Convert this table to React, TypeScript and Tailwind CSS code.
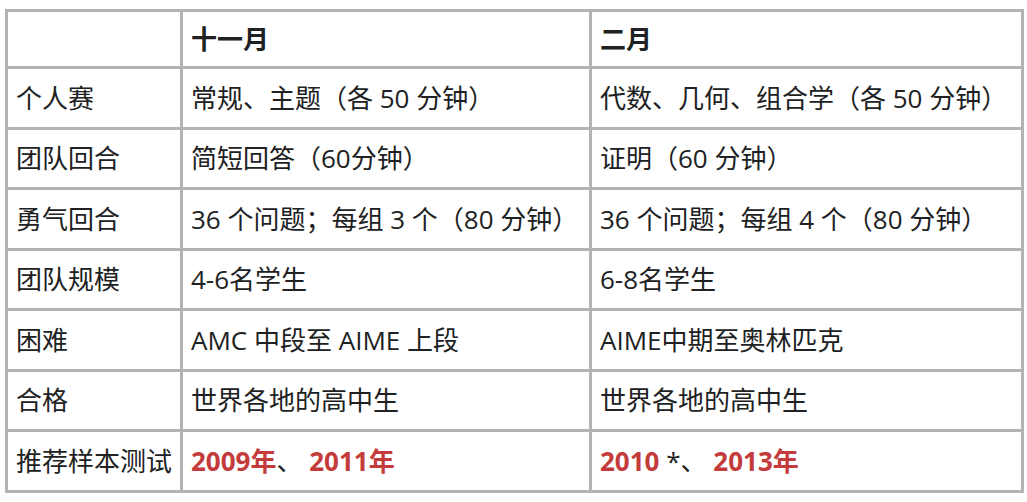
const rows: { label: string; nov: React.ReactNode; feb: React.ReactNode }[] = [
  { label: "个人赛", nov: "常规、主题（各 50 分钟）", feb: "代数、几何、组合学（各 50 分钟）" },
  { label: "团队回合", nov: "简短回答（60分钟）", feb: "证明（60 分钟）" },
  { label: "勇气回合", nov: "36 个问题；每组 3 个（80 分钟）", feb: "36 个问题；每组 4 个（80 分钟）" },
  { label: "团队规模", nov: "4-6名学生", feb: "6-8名学生" },
  { label: "困难", nov: "AMC 中段至 AIME 上段", feb: "AIME中期至奥林匹克" },
  { label: "合格", nov: "世界各地的高中生", feb: "世界各地的高中生" },
  {
    label: "推荐样本测试",
    nov: (
      <>
        <a className="font-bold text-[#c33b3b]">2009年</a>、 <a className="font-bold text-[#c33b3b]">2011年</a>
      </>
    ),
    feb: (
      <>
        <a className="font-bold text-[#c33b3b]">2010</a> *、 <a className="font-bold text-[#c33b3b]">2013年</a>
      </>
    ),
  },
];

const cell = "border-[3px] border-[#b3b3b3] px-2 py-0 text-left align-middle whitespace-nowrap";

export default function App() {
  return (
    <div
      className="min-h-screen bg-white pl-[5px] pt-[9px] text-[26px] leading-none text-[#202122]"
      style={{ fontFamily: '"Open Sans", "Noto Sans CJK SC", sans-serif' }}
    >
      <table className="w-[1016px] table-fixed border-collapse">
        <colgroup>
          <col className="w-[175px]" />
          <col className="w-[409px]" />
          <col className="w-[432px]" />
        </colgroup>
        <thead>
          <tr className="h-[57px]">
            <th className={cell}></th>
            <th className={`${cell} font-bold`}>十一月</th>
            <th className={`${cell} font-bold`}>二月</th>
          </tr>
        </thead>
        <tbody>
          {rows.map((row) => (
            <tr key={row.label} className="h-[60.5px]">
              <td className={cell}>{row.label}</td>
              <td className={cell}>{row.nov}</td>
              <td className={cell}>{row.feb}</td>
            </tr>
          ))}
        </tbody>
      </table>
    </div>
  );
}
